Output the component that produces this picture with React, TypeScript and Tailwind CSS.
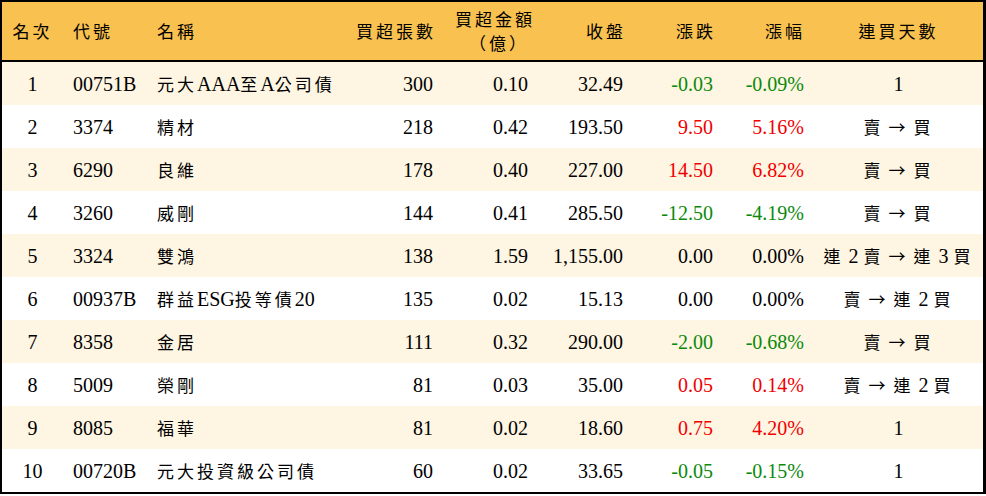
import React from "react";

type Row = {
  rank: number;
  code: string;
  name: string;
  lots: string;
  amount: string;
  close: string;
  change: string;
  pct: string;
  streak: string;
};

const rows: Row[] = [
  { rank: 1, code: "00751B", name: "元大AAA至A公司債", lots: "300", amount: "0.10", close: "32.49", change: "-0.03", pct: "-0.09%", streak: "1" },
  { rank: 2, code: "3374", name: "精材", lots: "218", amount: "0.42", close: "193.50", change: "9.50", pct: "5.16%", streak: "賣 → 買" },
  { rank: 3, code: "6290", name: "良維", lots: "178", amount: "0.40", close: "227.00", change: "14.50", pct: "6.82%", streak: "賣 → 買" },
  { rank: 4, code: "3260", name: "威剛", lots: "144", amount: "0.41", close: "285.50", change: "-12.50", pct: "-4.19%", streak: "賣 → 買" },
  { rank: 5, code: "3324", name: "雙鴻", lots: "138", amount: "1.59", close: "1,155.00", change: "0.00", pct: "0.00%", streak: "連 2 賣 → 連 3 買" },
  { rank: 6, code: "00937B", name: "群益ESG投等債20", lots: "135", amount: "0.02", close: "15.13", change: "0.00", pct: "0.00%", streak: "賣 → 連 2 買" },
  { rank: 7, code: "8358", name: "金居", lots: "111", amount: "0.32", close: "290.00", change: "-2.00", pct: "-0.68%", streak: "賣 → 買" },
  { rank: 8, code: "5009", name: "榮剛", lots: "81", amount: "0.03", close: "35.00", change: "0.05", pct: "0.14%", streak: "賣 → 連 2 買" },
  { rank: 9, code: "8085", name: "福華", lots: "81", amount: "0.02", close: "18.60", change: "0.75", pct: "4.20%", streak: "1" },
  { rank: 10, code: "00720B", name: "元大投資級公司債", lots: "60", amount: "0.02", close: "33.65", change: "-0.05", pct: "-0.15%", streak: "1" },
];

const WIDE = /([\u2190-\u21ff\u3000-\u9fff\uff00-\uffef]+)/;

// CJK glyphs sit a bit smaller and spaced out in the original
function T({ s }: { s: string }) {
  const parts = s.split(WIDE);
  return (
    <>
      {parts.map((p, i) =>
        /[\u2190-\u21ff\u3000-\u9fff\uff00-\uffef]/.test(p) ? (
          <span key={i} className="text-[17px] tracking-[3px] font-['Noto_Sans_CJK_TC',sans-serif]">
            {p}
          </span>
        ) : (
          <span key={i}>{p}</span>
        )
      )}
    </>
  );
}

function tone(v: string) {
  if (v.startsWith("-")) return "text-[#0a8a0a]";
  if (parseFloat(v) > 0) return "text-[#f00000]";
  return "text-black";
}

const cols = "grid grid-cols-[61px_84px_196px_100px_95px_95px_90px_91px_169px]";

export default function App() {
  return (
    <div className="w-[986px] h-[496px] bg-white font-['Liberation_Serif','Noto_Sans_CJK_TC',serif] text-[20px] text-black">
      <div className="border-t-2 border-l-2 border-r-[3px] border-b-2 border-black">
        <div className={`${cols} h-[60px] bg-[#f8c150] border-b-2 border-black items-center leading-6`}>
          <div className="text-center"><T s="名次" /></div>
          <div className="pl-[10px]"><T s="代號" /></div>
          <div className="pl-[10px]"><T s="名稱" /></div>
          <div className="text-right pr-[7px]"><T s="買超張數" /></div>
          <div className="text-right pr-[3px] flex flex-col items-end">
            <span><T s="買超金額" /></span>
            <span className="pr-[6px]"><T s="（億）" /></span>
          </div>
          <div className="text-right pr-[7px]"><T s="收盤" /></div>
          <div className="text-right pr-[7px]"><T s="漲跌" /></div>
          <div className="text-right pr-[9px]"><T s="漲幅" /></div>
          <div className="text-center"><T s="連買天數" /></div>
        </div>
        {rows.map((r) => (
          <div
            key={r.rank}
            className={`${cols} h-[43px] items-center ${r.rank % 2 === 1 ? "bg-[#fef5e2]" : "bg-white"}`}
          >
            <div className="text-center">{r.rank}</div>
            <div className="pl-[10px]">{r.code}</div>
            <div className="pl-[10px] whitespace-nowrap"><T s={r.name} /></div>
            <div className="text-right pr-[10px]">{r.lots}</div>
            <div className="text-right pr-[10px]">{r.amount}</div>
            <div className="text-right pr-[10px]">{r.close}</div>
            <div className={`text-right pr-[10px] ${tone(r.change)}`}>{r.change}</div>
            <div className={`text-right pr-[10px] ${tone(r.pct)}`}>{r.pct}</div>
            <div className="text-center whitespace-nowrap"><T s={r.streak} /></div>
          </div>
        ))}
      </div>
    </div>
  );
}
